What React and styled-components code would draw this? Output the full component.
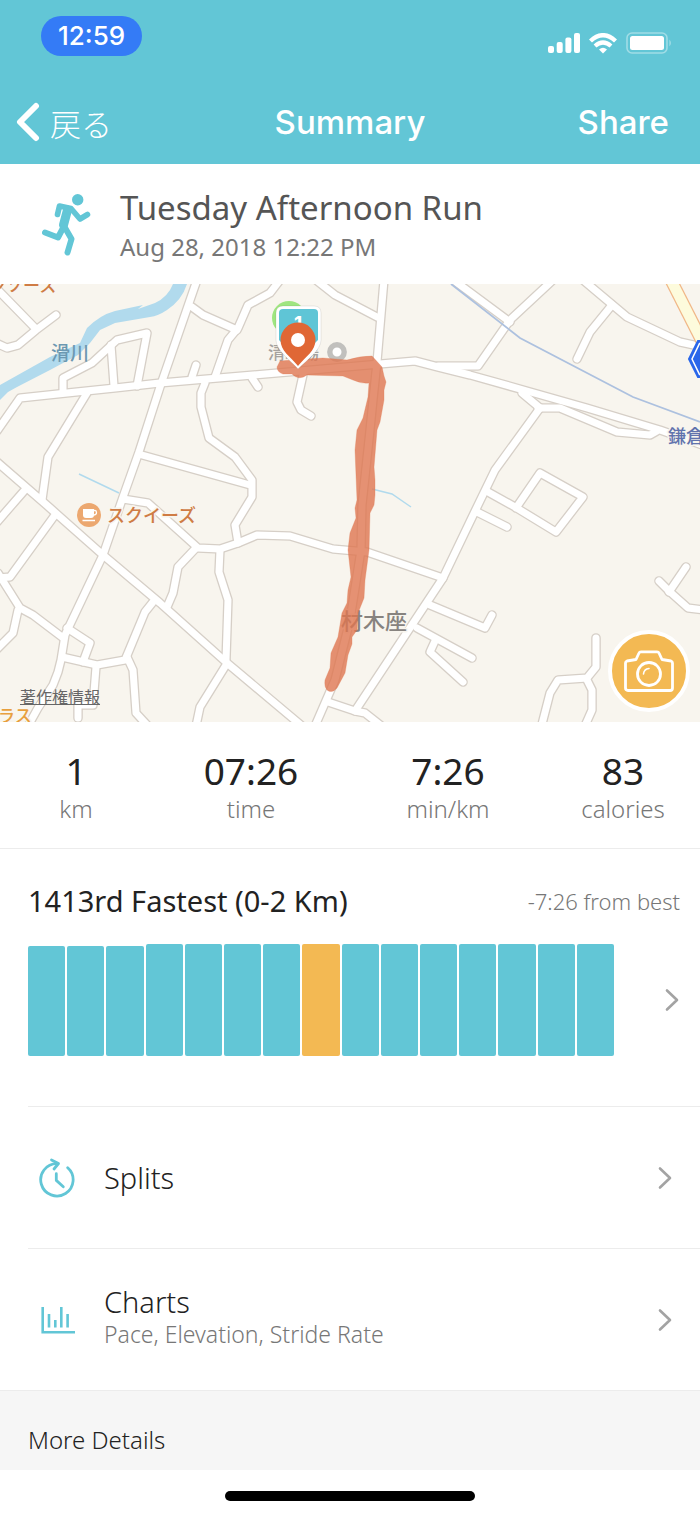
import styled, { createGlobalStyle } from 'styled-components'

const teal = '#62c6d6'
const amber = '#f3b953'

const GlobalStyle = createGlobalStyle`
  * {
    box-sizing: border-box;
  }

  body {
    margin: 0;
    background: #fff;
    color: #222;
    font-family: 'Noto Sans', 'Noto Sans CJK JP', sans-serif;
  }

  h1, h2, p {
    margin: 0;
    font-weight: 400;
  }

  button {
    border: none;
    padding: 0;
    background: transparent;
    color: inherit;
    font: inherit;
    cursor: pointer;
  }

  a {
    color: inherit;
    text-decoration: none;
  }

  svg {
    display: block;
    flex: none;
  }
`

const Header = styled.header`
  background: ${teal};
  color: #fff;
  font-family: Inter, 'Noto Sans CJK JP', sans-serif;
`

const StatusBar = styled.div`
  display: flex;
  justify-content: space-between;
  align-items: center;
  height: 72px;
  padding: 0 28px 0 41px;
`

const Clock = styled.span`
  padding: 0 17px;
  border-radius: 20px;
  background: #347bf6;
  font-size: 26px;
  font-weight: 500;
  line-height: 40px;
`

const StatusIcons = styled.div`
  display: flex;
  align-items: center;
  gap: 8px;
  padding-top: 14px;
`

const NavBar = styled.nav`
  display: grid;
  grid-template-columns: 1fr auto 1fr;
  align-items: center;
  height: 92px;
  padding: 8px 16px 0;
  font-size: 33px;
  font-weight: 500;
`

const BackButton = styled.button`
  display: flex;
  align-items: center;
  justify-self: start;
  gap: 10px;
  font-family: 'Noto Sans CJK JP', sans-serif;
  font-size: 31px;
  font-weight: 300;
`

const NavTitle = styled.h1`
  font-size: 33px;
  font-weight: 500;
`

const ShareButton = styled.button`
  justify-self: end;
  padding-right: 15px;
`

const Activity = styled.section`
  display: flex;
  align-items: center;
  gap: 28px;
  height: 120px;
  padding: 2px 42px 0;
`

const ActivityName = styled.h2`
  color: #555;
  font-size: 33px;
  line-height: 44px;
`

const ActivityDate = styled.p`
  color: #777;
  font-size: 24px;
  line-height: 34px;
`

const MapArea = styled.section`
  position: relative;
`

const MapDrawing = styled.svg`
  width: 100%;
  height: auto;
  font-family: 'Noto Sans CJK JP', sans-serif;
  font-weight: 500;
`

const LegalLink = styled.a`
  position: absolute;
  left: 20px;
  bottom: 14px;
  color: #666;
  font-family: 'Noto Sans CJK JP', sans-serif;
  font-size: 16px;
  line-height: 24px;
  text-decoration: underline;
`

const CameraButton = styled.button`
  position: absolute;
  right: 10px;
  bottom: 10px;
  display: grid;
  place-items: center;
  width: 82px;
  height: 82px;
  border: 4px solid #fff;
  border-radius: 50%;
  background: ${amber};
`

const Stats = styled.section`
  display: grid;
  grid-template-columns: 152fr 198fr 196fr 154fr;
  padding: 25px 0;
  border-bottom: 1px solid #ececec;
  text-align: center;
`

const StatValue = styled.p`
  font-size: 37px;
  line-height: 48px;
`

const StatLabel = styled.p`
  color: #777;
  font-size: 24px;
  font-weight: 300;
  line-height: 28px;
`

const Ranking = styled.section`
  padding: 32px 20px 0 28px;
`

const RankingHead = styled.div`
  display: flex;
  justify-content: space-between;
  align-items: center;
  line-height: 40px;
`

const RankingTitle = styled.h2`
  font-size: 29px;
`

const RankingNote = styled.p`
  color: #777;
  font-size: 22px;
  font-weight: 300;
`

const RankingLink = styled.a`
  display: flex;
  align-items: center;
  gap: 50px;
  padding: 23px 0 50px;
`

const Bars = styled.div`
  display: flex;
  flex: 1;
  align-items: flex-end;
  gap: 2px;
  height: 112px;
`

const Bar = styled.span`
  flex: 1;
  border-radius: 2px;
  background: ${({ $current }) => ($current ? amber : teal)};
`

const Row = styled.a`
  display: flex;
  align-items: center;
  height: 142px;
  margin-left: 28px;
  padding: 0 27px 0 9px;
  border-top: 1px solid #ececec;
`

const RowIcon = styled.span`
  width: 67px;
`

const RowText = styled.span`
  flex: 1;
`

const RowTitle = styled.span`
  display: block;
  font-size: 29px;
  font-weight: 300;
  line-height: 36px;
`

const RowNote = styled.span`
  display: block;
  padding-bottom: 8px;
  color: #777;
  font-size: 23px;
  font-weight: 300;
  line-height: 28px;
`

const MoreDetails = styled.h2`
  padding: 31px 28px 12px;
  border-top: 1px solid #ececec;
  background: #f6f6f6;
  font-size: 24px;
  font-weight: 300;
  line-height: 36px;
`

const HomeBar = styled.div`
  width: 250px;
  height: 10px;
  margin: 21px auto 14px;
  border-radius: 5px;
  background: #000;
`

const roads = [
  '-5,287 36,329',
  '-4,343 7,348 18,345 36,330 56,315',
  '197,280 160,387 139,452 123,497 103,555 65,635 61,660 58,672 53,685 38,708 28,726',
  '-3,431 20,398 67,393 115,388 160,383 230,377 300,371 380,364 415,361 438,367 470,375 527,391 587,408 660,430 705,446',
  '63,392 63,378 92,363 117,340 147,333 137,386',
  '111,345 114,386',
  '87,393 48,457 42,500',
  '-3,462 50,508 103,555 160,603 227,663 302,726',
  '24,491 -3,522',
  '55,515 10,577 -3,578',
  '-2,573 20,608 33,615 62,637',
  '18,610 13,633 -3,649',
  '67,628 90,643 83,662',
  '62,657 97,665 125,660 128,653 145,612 153,602',
  '96,667 93,705 78,705 78,718',
  '127,657 133,670 136,713 148,726',
  '226,665 200,707 196,726',
  '142,455 250,485',
  '123,499 148,503 198,548 220,549 238,543 257,535 290,536 333,549 367,552 443,578',
  '195,549 178,567 173,593 167,607',
  '220,550 219,572 228,600 226,660',
  '205,383 201,393 201,407 209,438 235,457 252,480 252,497 235,525 238,543',
  '215,377 228,340 238,328 248,305 270,293 280,280',
  '192,307 203,315 237,330',
  '192,377 196,365',
  '252,378 258,387',
  '303,375 297,402 301,410 311,416',
  '316,280 335,295 377,317',
  '384,280 377,362 373,400 370,430 362,505 361,550 350,620 335,680 315,726',
  '452,279 510,322',
  '554,279 510,320 478,366 438,366',
  '583,280 627,317 680,342 703,347',
  '612,305 590,332 577,359',
  '522,393 540,408',
  '538,408 560,408 617,432 650,435 657,431',
  '540,408 495,470 478,505 443,578 355,711',
  '488,492 515,507 556,532 583,497 540,473 516,508',
  '477,512 507,527',
  '430,605 485,628 492,615',
  '417,628 472,658',
  '435,641 430,652 463,682',
  '328,702 355,711 365,713 384,728',
  '659,581 669,591 688,608 704,610',
  '669,592 686,567',
  '596,638 596,667 587,678 558,680 550,693 541,728',
  '587,680 592,690 592,710 584,728',
]

const track =
  'M277 367L280 361L292 360L323 358L347 360Q360 356 372 356L382 367L384 376L386 382L384 390V400L380 422L377 430L374 467L375 480V495L374 505L370 513L369 550L365 580L364 598L358 613L357 630L352 637V644L348 655L345 673L337 688Q332 694 327 690Q324 687 325 680L330 668L331 653L338 637L342 613L347 603L348 590L351 577L348 550L350 533L356 518L355 508L357 500L355 450L357 430L363 418L368 397L369 383Q361 384 353 380L343 376L307 375Q299 381 292 374H283Q277 372 277 367Z'

function Chevron() {
  return (
    <svg width="16" height="24" viewBox="0 0 16 24" fill="none" stroke="#a3a3a3" strokeWidth="2.6" strokeLinecap="round" strokeLinejoin="round">
      <path d="M3 2.500L13 12L3 21.500" />
    </svg>
  )
}

function Signal() {
  return (
    <svg width="32" height="20" viewBox="0 0 32 20" fill="#fff">
      <rect x="0" y="13" width="6" height="7" rx="2" />
      <rect x="8.700" y="9" width="6" height="11" rx="2" />
      <rect x="17.400" y="4.500" width="6" height="15.500" rx="2" />
      <rect x="26" y="0" width="6" height="20" rx="2" />
    </svg>
  )
}

function Wifi() {
  return (
    <svg width="30" height="21" viewBox="0 0 30 21">
      <path d="M2.500 8Q15 -3.500 27.500 8" fill="none" stroke="#fff" strokeWidth="4.400" />
      <path d="M7 13Q15 6 23 13" fill="none" stroke="#fff" strokeWidth="4.200" />
      <path d="M11 16.500Q15 13 19 16.500L15 20.500Z" fill="#fff" />
    </svg>
  )
}

function Battery() {
  return (
    <svg width="46" height="22" viewBox="0 0 46 22">
      <rect x="1" y="1" width="40" height="20" rx="5" fill="none" stroke="#fff" strokeOpacity=".4" strokeWidth="1.600" />
      <rect x="4" y="4" width="34" height="14" rx="2.500" fill="#fff" />
      <path d="M43.500 7.500Q46 11 43.500 14.500Z" fill="#fff" fillOpacity=".5" />
    </svg>
  )
}

function Runner() {
  return (
    <svg width="50" height="62" viewBox="0 0 50 62" fill="none" stroke={teal} strokeWidth="6" strokeLinecap="round" strokeLinejoin="round">
      <circle cx="35.700" cy="5.700" r="5.700" fill={teal} stroke="none" />
      <path d="M15.500 20.500L17.500 12L29 14.500L38 25L45.500 20.500" strokeWidth="5.600" />
      <path d="M25.500 16L21.500 31" strokeWidth="9" />
      <path d="M21 34L16 43.500L3 38.500" />
      <path d="M22 32L29.500 45L25.500 58.500" />
    </svg>
  )
}

function Camera() {
  return (
    <svg width="50" height="42" viewBox="0 0 50 42" fill="none" stroke="#fff" strokeWidth="2.800" strokeLinejoin="round">
      <path d="M3 11L12 9.500L15 3Q15.500 1.800 17 1.800H33Q34.500 1.800 35 3L38 9.500L47 11Q48.500 11.500 48.500 13V38Q48.500 40.500 46 40.500H4Q1.500 40.500 1.500 38V13Q1.500 11.500 3 11Z" />
      <circle cx="25" cy="24" r="11.500" />
      <path d="M19.500 24Q20 19 25 18.500" strokeWidth="1.600" strokeLinecap="round" />
    </svg>
  )
}

function SplitsIcon() {
  return (
    <svg width="40" height="42" viewBox="0 0 40 42" fill="none" stroke={teal} strokeWidth="2.800" strokeLinecap="round" strokeLinejoin="round">
      <path d="M30.700 10.700A16.200 16.200 0 1 1 20 6.600" />
      <path d="M14.500 3L21.500 6.500L17 12" />
      <path d="M19.300 16.700V23.400L26.300 29.700" />
    </svg>
  )
}

function ChartsIcon() {
  return (
    <svg width="40" height="28" viewBox="-2 0 40 28" fill="none" stroke={teal} strokeWidth="2.600">
      <path d="M3.700 1V26.300H36" />
      <path d="M10 8V21.500M16.300 14V21.500M22.300 1V21.500M28.600 8V21.500" />
    </svg>
  )
}

// Drawn in the coordinates of the tile, which starts at y = 284
function RouteMap() {
  return (
    <MapDrawing viewBox="0 284 700 438" role="img" aria-label="Route map">
      <rect y="284" width="700" height="438" fill="#f8f5ee" />
      <path d="M0 385L50 357L80 343L87 328Q100 315 115 311L143 305L138 309L155 303Q168 297 173 284H187Q182 300 167 310Q158 316 150 317L115 323L100 330L90 343L78 355L50 370L17 387L8 392L0 400Z" fill="#b1daed" />
      <path d="M79 474L119 493M372 489L392 494L411 507" fill="none" stroke="#b1daed" strokeWidth="1.500" />
      <g fill="none" strokeLinecap="round" strokeLinejoin="round">
        <g stroke="#d6cfc7" strokeWidth="9.600">
          {roads.map((points) => (
            <polyline key={points} points={points} />
          ))}
        </g>
        <g stroke="#fff" strokeWidth="7">
          {roads.map((points) => (
            <polyline key={points} points={points} />
          ))}
        </g>
      </g>
      <path d="M451 284L520 338L633 397L700 422" fill="none" stroke="#adc1df" strokeWidth="1.800" />
      <path d="M671 280L704 345" stroke="#f0b787" strokeWidth="13" />
      <path d="M671 280L704 345" stroke="#fdfbdc" strokeWidth="10.500" />

      <g stroke="#f8f5ee" strokeWidth="3" paintOrder="stroke" strokeLinejoin="round">
        <text x="51" y="360" fontSize="19" fill="#6c98b1" stroke="none">滑川</text>
        <text x="6" y="292" fontSize="17" fill="#cf7c45">ソース</text>
        <text x="107" y="522" fontSize="18" fill="#cf7c45">スクイーズ</text>
        <text x="-2" y="722" fontSize="17" fill="#e8a03e">ラス</text>
        <text x="341" y="629" fontSize="22" fill="#87837f">材木座</text>
        <text x="668" y="443" fontSize="18" fill="#6173ad">鎌倉</text>
        <text x="268" y="359" fontSize="17" fill="#a5a29e">清水湯</text>
      </g>
      <path d="M-1 289L3 284" stroke="#cf7c45" strokeWidth="2" />

      <circle cx="89" cy="515" r="12" fill="#eca870" />
      <path d="M83 509H94V515Q94 518 91 518H86Q83 518 83 515Z" fill="#fff" />
      <path d="M94 510.500H95Q96.500 510.500 96.500 512.500Q96.500 515 93.500 515M82.500 520.500H95" fill="none" stroke="#fff" strokeWidth="1.300" />

      <path d="M704 341H698L689 359L698 377H704Z" fill="#2a66ea" stroke="#2a66ea" strokeWidth="2" />
      <path d="M704 343.500H699.500L692 359L699.500 374.500H704Z" fill="none" stroke="#fff" strokeWidth="1.500" />

      <circle cx="337" cy="352" r="7.200" fill="#fff" stroke="#c1c0bd" strokeWidth="5.400" />
      <circle cx="289" cy="318" r="17" fill="#9fe580" />
      <path d={track} fill="#df7650" fillOpacity=".8" stroke="#df7650" strokeOpacity=".3" strokeLinejoin="round" />

      <path d="M283 306H314Q321 306 321 313V340C321 350 308 359 298 369C289 359 276 350 276 340V313Q276 306 283 306Z" fill="#fff" stroke="#000" strokeOpacity=".08" />
      <path d="M283 309H314Q318 309 318 313V340L298 360L279 340V313Q279 309 283 309Z" fill="#5fc5d6" />
      <text x="298" y="330" textAnchor="middle" fontFamily="Inter, sans-serif" fontWeight="700" fontSize="19" fill="#fff">1</text>
      <path d="M298 366C290 356 280.500 351 280.500 340A17.500 17.500 0 0 1 315.500 340C315.500 351 306 356 298 366Z" fill="#e06735" />
      <circle cx="298" cy="340" r="7" fill="#fff" />
    </MapDrawing>
  )
}

const stats = [
  { value: '1', label: 'km' },
  { value: '07:26', label: 'time' },
  { value: '7:26', label: 'min/km' },
  { value: '83', label: 'calories' },
]

const heights = [110, 110, 110, 112, 112, 112, 112, 112, 112, 112, 112, 112, 112, 112, 112]

export default function App() {
  return (
    <>
      <GlobalStyle />
      <Header>
        <StatusBar>
          <Clock>12:59</Clock>
          <StatusIcons>
            <Signal />
            <Wifi />
            <Battery />
          </StatusIcons>
        </StatusBar>
        <NavBar>
          <BackButton type="button">
            <svg width="24" height="42" viewBox="0 0 24 42" fill="none" stroke="#fff" strokeWidth="6" strokeLinecap="round" strokeLinejoin="round">
              <path d="M20 5L4 21L20 37" />
            </svg>
            戻る
          </BackButton>
          <NavTitle>Summary</NavTitle>
          <ShareButton type="button">Share</ShareButton>
        </NavBar>
      </Header>

      <main>
        <Activity>
          <Runner />
          <div>
            <ActivityName>Tuesday Afternoon Run</ActivityName>
            <ActivityDate>Aug 28, 2018 12:22 PM</ActivityDate>
          </div>
        </Activity>

        <MapArea>
          <RouteMap />
          <LegalLink href="#legal">著作権情報</LegalLink>
          <CameraButton type="button" aria-label="Add photo">
            <Camera />
          </CameraButton>
        </MapArea>

        <Stats>
          {stats.map(({ value, label }) => (
            <div key={label}>
              <StatValue>{value}</StatValue>
              <StatLabel>{label}</StatLabel>
            </div>
          ))}
        </Stats>

        <Ranking>
          <RankingHead>
            <RankingTitle>1413rd Fastest (0-2 Km)</RankingTitle>
            <RankingNote>-7:26 from best</RankingNote>
          </RankingHead>
          <RankingLink href="#ranking" aria-label="Ranking">
            <Bars>
              {heights.map((height, i) => (
                <Bar key={i} $current={i === 7} style={{ height }} />
              ))}
            </Bars>
            <Chevron />
          </RankingLink>
        </Ranking>

        <Row href="#splits">
          <RowIcon>
            <SplitsIcon />
          </RowIcon>
          <RowText>
            <RowTitle>Splits</RowTitle>
          </RowText>
          <Chevron />
        </Row>
        <Row href="#charts">
          <RowIcon>
            <ChartsIcon />
          </RowIcon>
          <RowText>
            <RowTitle>Charts</RowTitle>
            <RowNote>Pace, Elevation, Stride Rate</RowNote>
          </RowText>
          <Chevron />
        </Row>

        <MoreDetails>More Details</MoreDetails>
      </main>
      <HomeBar />
    </>
  )
}
